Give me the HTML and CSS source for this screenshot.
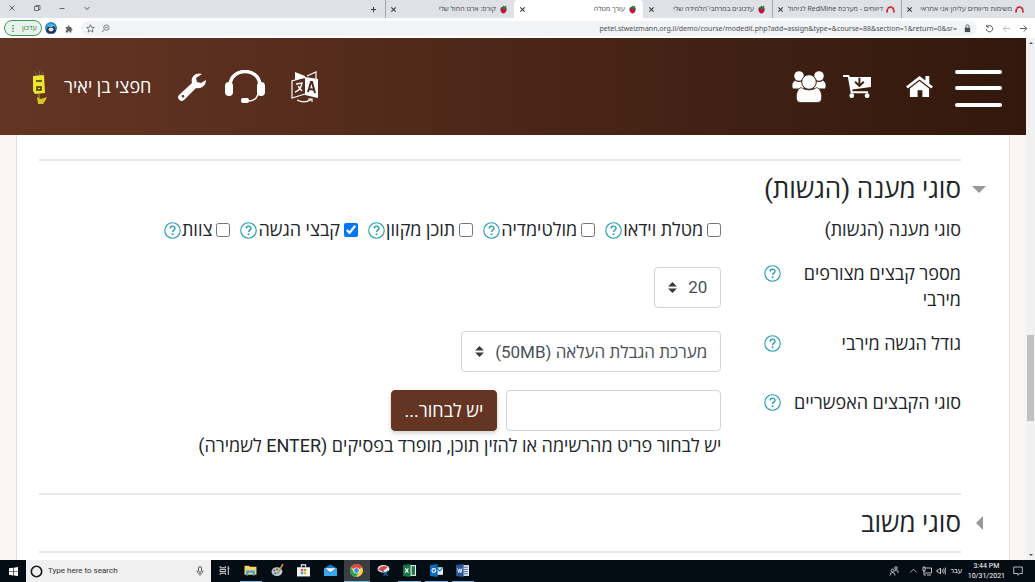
FILE: index.html
```html
<!DOCTYPE html>
<html lang="he">
<head>
    <meta charset="UTF-8">
    <meta name="viewport" content="width=device-width, initial-scale=1.0">
    <title>עורך מטלה</title>
    <link rel="stylesheet" href="styles.css">
</head>
<body>
    <svg class="sprite" aria-hidden="true">
        <symbol id="berry" viewBox="0 0 16 18">
            <path d="M8 5C3 3 1 7 2 11c1 4 4 6 6 6s5-2 6-6c1-4-1-8-6-6z" fill="#c3123f"/>
            <path d="M2 5l4-1 1-3 3 2 4-2-1 4 2 2-4 1-3 2-2-3z" fill="#2c7a36"/>
        </symbol>
        <symbol id="redmine" viewBox="0 0 18 16">
            <path d="M2 14C2 6 5 3 9 3s7 3 7 11" fill="none" stroke="#cf2027" stroke-width="3.500" stroke-dasharray="8 .6"/>
        </symbol>
        <symbol id="close" viewBox="0 0 8 8">
            <path d="M1.500 1.500l5 5m0-5l-5 5" stroke="#3c4043" stroke-width="1.300"/>
        </symbol>
        <symbol id="help" viewBox="0 0 18 18">
            <circle cx="9" cy="9" r="8.200" fill="none" stroke="#2aa0b5" stroke-width="1.200"/>
            <path d="M6.500 7c0-3.400 5.200-3.400 5.200-.3 0 1.900-2.600 1.900-2.600 4" fill="none" stroke="#2aa0b5" stroke-width="1.500"/>
            <circle cx="9.100" cy="13" r="1" fill="#2aa0b5"/>
        </symbol>
    </svg>

    <div class="tabstrip" dir="rtl">
        <div class="tab">
            <svg class="favicon"><use href="#redmine"/></svg>
            <span class="tab-title">משימות ודיווחים עליהן אני אחראי</span>
            <button class="tab-close" aria-label="סגירה"><svg><use href="#close"/></svg></button>
        </div>
        <div class="tab">
            <svg class="favicon"><use href="#redmine"/></svg>
            <span class="tab-title">דיווחים - מערכת RedMine לניהול</span>
            <button class="tab-close" aria-label="סגירה"><svg><use href="#close"/></svg></button>
        </div>
        <div class="tab">
            <svg class="favicon"><use href="#berry"/></svg>
            <span class="tab-title">עדכונים במרחבי־הלמידה שלי</span>
            <button class="tab-close" aria-label="סגירה"><svg><use href="#close"/></svg></button>
        </div>
        <div class="tab active">
            <svg class="favicon"><use href="#berry"/></svg>
            <span class="tab-title">עורך מטלה</span>
            <button class="tab-close" aria-label="סגירה"><svg><use href="#close"/></svg></button>
        </div>
        <div class="tab">
            <svg class="favicon"><use href="#berry"/></svg>
            <span class="tab-title">קורס: ארגז החול שלי</span>
            <button class="tab-close" aria-label="סגירה"><svg><use href="#close"/></svg></button>
        </div>
        <button class="new-tab" aria-label="כרטיסייה חדשה"><svg viewBox="0 0 8 8"><path d="M4 1v6M1 4h6" stroke="#3c4043" stroke-width="1.200"/></svg></button>
        <div class="window-controls" dir="ltr">
            <button aria-label="סגירה"><svg viewBox="0 0 8 8"><path d="M1.500 1.500l5 5m0-5l-5 5" stroke="#444" stroke-width=".8"/></svg></button>
            <button aria-label="שחזור"><svg viewBox="0 0 8 8"><path d="M1.500 2.500h4v4h-4zM3 2.500v-1h4v4H5.500" fill="none" stroke="#444" stroke-width=".7"/></svg></button>
            <button aria-label="מזעור"><svg viewBox="0 0 8 8"><path d="M1.500 4.500h5" stroke="#444" stroke-width=".8"/></svg></button>
            <button aria-label="חיפוש כרטיסיות"><svg viewBox="0 0 8 8"><path d="M1.500 3L4 5.500 6.500 3" fill="none" stroke="#444" stroke-width=".9"/></svg></button>
        </div>
    </div>

    <div class="toolbar">
        <button class="update-btn"><svg viewBox="0 0 4 10"><circle cx="2" cy="2" r=".9"/><circle cx="2" cy="5" r=".9"/><circle cx="2" cy="8" r=".9"/></svg><span>עדכון</span></button>
        <svg class="profile" viewBox="0 0 12 12"><circle cx="6" cy="6" r="6" fill="#2a8fc4"/><path d="M1 9l2-4 6-1 2 5-2 2.500H3z" fill="#20305e"/><ellipse cx="6" cy="7.500" rx="2.500" ry="2" fill="#f5ddd5"/><path d="M2 4q4-4 8 0L6 5z" fill="#4fc3e6"/></svg>
        <svg class="extension" viewBox="0 0 10 10"><path d="M1 3h2.500c-.6-2.500 2.600-2.500 2 0H8v2.400c2-.5 2 2.300 0 1.900V10H5.800c.4-2-2.400-2-2 0H1V7.300c1.800.3 1.800-2.300 0-1.900z" fill="#5f6368"/></svg>
        <div class="omnibox">
            <svg viewBox="0 0 10 10"><path d="M5 .8l1.200 2.900 3 .2L6.900 6l.8 3L5 7.400 2.300 9l.8-3L.8 3.900l3-.2z" fill="none" stroke="#5f6368" stroke-width=".9"/></svg>
            <svg viewBox="0 0 10 10"><circle cx="6" cy="4" r="3" fill="none" stroke="#5f6368" stroke-width=".9"/><path d="M3.800 6.200L1 9M4.600 4h2.800" stroke="#5f6368"/></svg>
            <input class="url" type="text" aria-label="כתובת" value="petel.stweizmann.org.il/demo/course/modedit.php?add=assign&amp;type=&amp;course=88&amp;section=1&amp;return=0&amp;sr=">
            <svg viewBox="0 0 10 10"><path d="M2 4h6v5H2z" fill="#4a4d51"/><path d="M3.300 4V2.600a1.700 1.700 0 013.400 0V4" fill="none" stroke="#4a4d51"/></svg>
        </div>
        <button class="nav-btn" aria-label="רענון"><svg viewBox="0 0 10 10"><path d="M2.300 3A3.500 3.500 0 111.500 5.500M2 .8V3.400h2.600" fill="none" stroke="#55585c" stroke-width="1.100"/></svg></button>
        <button class="nav-btn" aria-label="קדימה"><svg viewBox="0 0 10 10"><path d="M9 5H1.500M4.800 1.600L1.400 5l3.400 3.400" fill="none" stroke="#b9bbbe" stroke-width="1.100"/></svg></button>
        <button class="nav-btn" aria-label="אחורה"><svg viewBox="0 0 10 10"><path d="M1 5h7.500M5.200 1.600L8.600 5 5.200 8.400" fill="none" stroke="#55585c" stroke-width="1.100"/></svg></button>
    </div>

    <div class="viewport">
        <div class="page" dir="rtl">
            <header class="site-header">
                <button class="hamburger" aria-label="תפריט"><span></span><span></span><span></span></button>
                <a class="home" href="#" aria-label="דף הבית">
                    <svg viewBox="0 0 28 24"><path d="M14 1L0 12l1.800 2L14 4.600 26.200 14l1.800-2-3.800-3V1h-4v4.700z"/><path d="M4 14L14 6.200 24 14v9h-7v-7h-5v7H4z"/></svg>
                </a>
                <a class="cart" href="#" aria-label="סל">
                    <svg viewBox="0 0 30 26"><path d="M0 1h6l1.300 2H29v10.500L9.500 16l.3 2H26v2H8L5 3H0z"/><path d="M17 4v8m-4.500-4l4.500 4.300L21.500 8" fill="none" stroke="#391c10" stroke-width="2"/><circle cx="9" cy="22.500" r="2.500"/><circle cx="25" cy="22.500" r="2.500"/></svg>
                </a>
                <a class="users" href="#" aria-label="משתמשים">
                    <svg viewBox="0 0 34 32"><circle cx="7" cy="5" r="4.800"/><circle cx="27" cy="5" r="4.800"/><path d="M3 9.500q4 3 8 0l1 8H1q-2-5 2-8zM31 9.500q-4 3-8 0l-1 8h11q2-5-2-8z"/><circle cx="17" cy="11" r="7.300" stroke="#3e1f13"/><path d="M9 16.500q8 5 16 0c4 2 5 7 4.500 11-.3 3-2 4-4.500 4H9c-2.500 0-4.200-1-4.500-4-.5-4 .5-9 4.500-11z" stroke="#3e1f13" stroke-width=".7"/></svg>
                </a>
                <span class="header-space"></span>
                <a class="translate" href="#" aria-label="שפה">
                    <svg viewBox="0 0 28 32"><path d="M14 6l13 2v19l-13-3zM4 1l10 4v2L4 9z"/><path d="M14 6L1 10v17l13-4M16 5l9-4v7M6 29q8 4 15-1m-4 0h4v3" fill="none" stroke="#fff" stroke-width="1.200"/><path d="M5 13l6-1c-1 5-3 8-7 9m3-6l4 5" fill="none" stroke="#fff" stroke-width="1.300"/><path d="M17 21l3-10h1l3 11m-6-4l5 .8" fill="none" stroke="#54291b" stroke-width="2"/></svg>
                </a>
                <a class="headset" href="#" aria-label="תמיכה">
                    <svg viewBox="0 0 40 34"><path d="M5 15C6-3 34-3 35 15" fill="none" stroke="#fff" stroke-width="3.500"/><rect x="0" y="12" width="8" height="14" rx="4"/><rect x="32" y="12" width="8" height="14" rx="4"/><path d="M33 24q-2 7-9 7" fill="none" stroke="#fff" stroke-width="1.400"/><rect x="16" y="28" width="8" height="5" rx="2"/></svg>
                </a>
                <a class="wrench" href="#" aria-label="הגדרות">
                    <svg viewBox="0 0 28 28"><path fill-rule="evenodd" d="M24 1c-5-2-12 2-10 9L1 22c-3 3 2 8 5 5l12-12c5 1 10-2 10-8l-5 3-4-1-1-4zM5 22a1.300 1.300 0 110 2.600 1.300 1.300 0 010-2.600z"/></svg>
                </a>
                <span class="user-name">חפצי בן יאיר</span>
                <svg class="user-pic" viewBox="0 0 16 36"><path d="M7 7L3 2m5 5l1-6m0 6l4-4" stroke="#75685a"/><path d="M2 7l11-1 1 18-10 1-2-3z" fill="#efe52a"/><path d="M5 12h6M6 18h4v3H6z" fill="none" stroke="#3b3513" stroke-width="1.500"/><path d="M6 28l4 2 6-2-2 4-2 3H7z" fill="#d8c51d"/><path d="M8 25v4" stroke="#76752d" stroke-width="2"/></svg>
            </header>

            <main class="panel">
                <section class="fieldset">
                    <h2 class="open">סוגי מענה (הגשות)</h2>
                    <div class="form-row">
                        <div class="label-col"><span>סוגי מענה (הגשות)</span></div>
                        <div class="field-col options">
                            <div class="option"><label><input type="checkbox">מטלת וידאו</label><svg class="help"><use href="#help"/></svg></div>
                            <div class="option"><label><input type="checkbox">מולטימדיה</label><svg class="help"><use href="#help"/></svg></div>
                            <div class="option"><label><input type="checkbox">תוכן מקוון</label><svg class="help"><use href="#help"/></svg></div>
                            <div class="option"><label><input type="checkbox" checked>קבצי הגשה</label><svg class="help"><use href="#help"/></svg></div>
                            <div class="option"><label><input type="checkbox">צוות</label><svg class="help"><use href="#help"/></svg></div>
                        </div>
                    </div>
                    <div class="form-row">
                        <div class="label-col"><label for="maxfiles">מספר קבצים מצורפים מירבי</label><svg class="help"><use href="#help"/></svg></div>
                        <div class="field-col"><select id="maxfiles"><option>20</option></select></div>
                    </div>
                    <div class="form-row">
                        <div class="label-col"><label for="maxsize">גודל הגשה מירבי</label><svg class="help"><use href="#help"/></svg></div>
                        <div class="field-col"><select id="maxsize"><option>מערכת הגבלת העלאה (50MB)</option></select></div>
                    </div>
                    <div class="form-row">
                        <div class="label-col"><label for="filetypes">סוגי הקבצים האפשריים</label><svg class="help"><use href="#help"/></svg></div>
                        <div class="field-col">
                            <div class="picker">
                                <input id="filetypes" type="text">
                                <button class="choose">יש לבחור...</button>
                            </div>
                            <p class="hint">יש לבחור פריט מהרשימה או להזין תוכן, מופרד בפסיקים (ENTER לשמירה)</p>
                        </div>
                    </div>
                </section>
                <section class="fieldset">
                    <h2 class="closed">סוגי משוב</h2>
                </section>
                <section class="fieldset"></section>
            </main>
        </div>
        <div class="scrollbar">
            <span class="arrow-up"></span>
            <div class="track"><div class="thumb"></div></div>
            <span class="arrow-down"></span>
        </div>
    </div>

    <footer class="taskbar">
        <button class="start" aria-label="Start"><svg viewBox="0 0 10 10"><path d="M0 1.500l4.500-.7v4H0zM5.200.7L10 0v4.800H5.200zM0 5.400h4.500v4L0 8.700zM5.200 5.400H10V10l-4.800-.6z" fill="#fff"/></svg></button>
        <div class="search">
            <svg class="cortana" viewBox="0 0 12 12"><circle cx="6" cy="6" r="4.800" fill="none" stroke="#1b1b1b" stroke-width="1.500"/></svg>
            <input type="text" placeholder="Type here to search" aria-label="Type here to search">
            <svg class="mic" viewBox="0 0 8 10"><rect x="2.500" y=".6" width="3" height="5.500" rx="1.500" fill="none" stroke="#333" stroke-width=".8"/><path d="M1 4.500c0 4.500 6 4.500 6 0M4 8v2" fill="none" stroke="#333" stroke-width=".7"/></svg>
        </div>
        <div class="tasks">
            <button class="task" aria-label="Task View"><svg viewBox="0 0 12 12"><path d="M2 2v1.500h5V2M2 10V8.500h5V10M2 5h5v2H2zM9.500 2v8M9 4h1.500" fill="none" stroke="#ddd" stroke-width=".9"/></svg></button>
            <button class="task running" aria-label="File Explorer"><svg viewBox="0 0 12 12"><path d="M.5 1.500h4l1 1h6V10H.5z" fill="#f7d36b"/><path d="M2 6h8v4.500H8V8H4v2.500H2z" fill="#3da0dc"/></svg></button>
            <button class="task" aria-label="Paint"><svg viewBox="0 0 12 12"><ellipse cx="5.500" cy="7" rx="5" ry="4" fill="#b6cfdd"/><circle cx="3" cy="6" r="1" fill="#d33b2f"/><circle cx="5.500" cy="5" r="1" fill="#3a8b3d"/><circle cx="4" cy="8.500" r="1" fill="#2866b2"/><path d="M11 0L6 9" stroke="#d18a3c" stroke-width="1.500"/></svg></button>
            <button class="task" aria-label="Store"><svg viewBox="0 0 12 12"><path d="M0 3h12v8.500H0z" fill="#f5f5f5"/><path d="M4 3V.8h4V3" fill="none" stroke="#f5f5f5"/><path d="M3.500 4.500h2.200v2.200H3.500z" fill="#e8552d"/><path d="M6.300 4.500h2.200v2.200H6.300z" fill="#7eb72e"/><path d="M3.500 7.300h2.200v2.200H3.500z" fill="#2b9fe0"/><path d="M6.300 7.300h2.200v2.200H6.300z" fill="#f6b51c"/></svg></button>
            <button class="task" aria-label="Mail"><svg viewBox="0 0 12 12"><path d="M0 4l6-3.500L12 4v7H0z" fill="#1576c7"/><path d="M1 4h10L6 7.500z" fill="#fff"/><path d="M0 4l6 4 6-4v7H0z" fill="#37a9ea"/></svg></button>
            <button class="task running focused" aria-label="Chrome"><svg viewBox="0 0 12 12"><circle cx="6" cy="6" r="6" fill="#ffcd41"/><path d="M6 6L.8 3a6 6 0 0110.400 0z" fill="#df4a3c"/><path d="M.8 3a6 6 0 004.700 9L8 7.500 6 6 3.500 7.500z" fill="#28a057"/><circle cx="6" cy="6" r="2.800" fill="#fff"/><circle cx="6" cy="6" r="2.200" fill="#4688f0"/></svg></button>
            <button class="task" aria-label="Snipping Tool"><svg viewBox="0 0 12 12"><ellipse cx="6" cy="4.500" rx="5.500" ry="3.500" fill="#eee"/><path d="M1 5q4-5 9-2L5 7z" fill="#d94343"/><path d="M5 6l5 5M10 6L6 11" stroke="#2474b8"/></svg></button>
            <button class="task running" aria-label="Excel"><svg viewBox="0 0 12 12"><path d="M5 1h7v10H5z" fill="#e8f3ec"/><path d="M8 2h3v8H8z" fill="#1d7446"/><path d="M0 1l7-1v12l-7-1z" fill="#1d7446"/><path d="M2 4l3 4m0-4L2 8" stroke="#fff"/></svg></button>
            <button class="task running" aria-label="Outlook"><svg viewBox="0 0 12 12"><path d="M6 3h6v7H6z" fill="#dcecfa"/><path d="M6 3l3 3.500L12 3" fill="none" stroke="#0b6bbd"/><path d="M0 1l7-1v12l-7-1z" fill="#0b6bbd"/><circle cx="3.500" cy="6" r="1.700" fill="none" stroke="#fff"/></svg></button>
            <button class="task running" aria-label="Word"><svg viewBox="0 0 12 12"><path d="M6 1h6v10H6z" fill="#e7edf7"/><path d="M7 3h4M7 5h4M7 7h4M7 9h4" stroke="#2a5699" stroke-width=".8"/><path d="M0 1l7-1v12l-7-1z" fill="#2a5699"/><path d="M1.500 4l1 4 1-3.500 1 3.500 1-4" fill="none" stroke="#fff" stroke-width=".8"/></svg></button>
        </div>
        <div class="tray">
            <svg viewBox="0 0 10 10"><circle cx="3.500" cy="4.500" r="1.500"/><path d="M1 9.500q0-3 2.500-3T6 9.500"/><circle cx="7" cy="2" r="1.300"/><path d="M5.500 5q1.500-2 3.500 0v2"/></svg>
            <svg class="chevron" viewBox="0 0 10 10"><path d="M1.500 6.500L5 3l3.500 3.500"/></svg>
            <svg viewBox="0 0 10 10"><path d="M3 2h6.500v5H3M5 9h4M1 1h2v4H1zM2 5v4h2"/></svg>
            <svg viewBox="0 0 10 10"><path d="M1 4h1.500L4.500 2v6l-2-2H1zM6 3.500q1 1.500 0 3M7.500 2.500q1.700 2.500 0 5M9 1.500q2 3.500 0 7"/></svg>
            <span class="lang">עבר</span>
            <div class="clock"><span>3:44 PM</span><span>10/31/2021</span></div>
            <svg class="notify" viewBox="0 0 10 10"><path d="M.7 1h8.600v6.500H6.500L5 9.300V7.500H.7z"/></svg>
        </div>
    </footer>
</body>
</html>
```
FILE: styles.css
```css
:root {
    --brown: #653524;
    --brown-dark: #32180d;
    --line: #e8e8eb;
    --border: #ced4da;
    --text: #212529;
    --ui-font: "Open Sans", "Liberation Sans", sans-serif;
}

* {
    box-sizing: border-box;
}

body {
    margin: 0;
    height: 100vh;
    display: flex;
    flex-direction: column;
    overflow: hidden;
    font-family: Roboto, "Open Sans", sans-serif;
    font-size: 18px;
    line-height: 26px;
    color: var(--text);
}

button {
    font: inherit;
    border: none;
    background: none;
    padding: 0;
    cursor: pointer;
}

svg {
    display: block;
    flex-shrink: 0;
}

.sprite {
    position: absolute;
    width: 0;
    height: 0;
}

/* Browser window */
.tabstrip {
    display: flex;
    flex-shrink: 0;
    height: 18px;
    padding-right: 5px;
    background: #dee1e6;
    font-family: var(--ui-font);
    font-size: 7px;
    line-height: 18px;
    color: #45494d;
}

.tab {
    display: flex;
    align-items: center;
    gap: 3px;
    flex: 0 1 129px;
    min-width: 0;
    padding: 0 6px 0 4px;
    border-left: 1px solid #a3a6aa;
    background-clip: padding-box;
}

.tab:nth-child(3),
.tab.active {
    border-color: transparent;
}

.tab.active {
    background: #fff;
    border-radius: 4px 4px 0 0;
}

.favicon {
    width: 9px;
    height: 9px;
}

.tab-title {
    flex: 1;
    white-space: nowrap;
}

.tab-close svg,
.new-tab svg {
    width: 7px;
    height: 7px;
}

.new-tab {
    padding: 0 8px;
}

.window-controls {
    display: flex;
    gap: 17px;
    margin-right: auto;
    padding: 0 8px;
}

.window-controls svg {
    width: 8px;
    height: 8px;
}

.window-controls button {
    padding-bottom: 3px;
}

.toolbar {
    display: flex;
    align-items: center;
    gap: 8px;
    flex-shrink: 0;
    height: 20px;
    padding: 0 7px 0 4px;
    background: #fff;
    font-family: var(--ui-font);
    font-size: 7px;
}

.update-btn {
    display: flex;
    align-items: center;
    gap: 7px;
    height: 16px;
    width: 38px;
    padding: 0 6px;
    border: 1px solid #3c9a55;
    border-radius: 8px;
    background: #e9f3ec;
    color: #1e7a39;
}

.update-btn svg {
    width: 4px;
    height: 9px;
    fill: #1e7a39;
}

.profile {
    width: 12px;
    height: 12px;
    margin-left: -5px;
}

.extension {
    width: 8px;
    height: 9px;
}

.omnibox {
    display: flex;
    align-items: center;
    gap: 6px;
    flex: 1;
    height: 15px;
    padding: 0 5px;
    border-radius: 8px;
    background: #f1f3f4;
}

.omnibox svg,
.nav-btn svg {
    width: 9px;
    height: 9px;
}

.url {
    flex: 1;
    min-width: 0;
    padding: 0;
    border: none;
    background: none;
    font-family: "Noto Sans", sans-serif;
    font-size: 7px;
    color: #4d5054;
    text-align: right;
}

/* Site */
.viewport {
    display: flex;
    flex: 1;
    min-height: 0;
}

.page {
    flex: 1;
    display: flex;
    flex-direction: column;
    overflow: hidden;
    background: #faf4f2;
}

.site-header {
    display: flex;
    align-items: center;
    flex-shrink: 0;
    height: 97px;
    padding: 0 24px 0 31px;
    background: linear-gradient(to left, var(--brown-dark), var(--brown));
    color: #fff;
}

.site-header svg {
    fill: #fff;
}

.hamburger {
    display: flex;
    flex-direction: column;
    justify-content: space-between;
    width: 47px;
    height: 37px;
    margin: 3px 0 0 22px;
}

.hamburger span {
    height: 4px;
    border-radius: 2px;
    background: #fff;
}

.home svg {
    width: 27px;
    height: 23px;
    margin-left: 34px;
}

.cart svg {
    width: 29px;
    height: 25px;
    margin-left: 17px;
}

.users svg {
    width: 34px;
    height: 32px;
}

.header-space {
    flex: 1;
}

.translate svg {
    width: 28px;
    height: 32px;
    margin-left: 26px;
}

.headset svg {
    width: 40px;
    height: 34px;
    margin-left: 19px;
}

.wrench svg {
    width: 28px;
    height: 28px;
    margin-left: 27px;
}

.user-name {
    margin-left: 17px;
}

.user-pic {
    width: 16px;
    height: 36px;
}

.panel {
    flex: 1;
    margin: 0 16px;
    padding: 24px 48px 0 22px;
    border: solid #e2dfdf;
    border-width: 0 1px;
    background: #fff;
}

.fieldset {
    padding-bottom: 16px;
    border-top: 2px solid var(--line);
}

.fieldset:nth-child(2) {
    padding-bottom: 0;
}

h2 {
    position: relative;
    margin: 0;
    font-size: 26px;
    font-weight: 400;
    line-height: 56px;
}

h2::before {
    content: "";
    position: absolute;
    right: -25px;
    top: 25px;
    border: 7px solid transparent;
}

h2.open::before {
    border-top-color: #999;
    border-bottom: 0;
}

h2.closed::before {
    right: -22px;
    top: 21px;
    border-right-color: #999;
    border-left: 0;
}

.form-row {
    display: flex;
    margin-bottom: 18px;
}

.label-col {
    display: flex;
    justify-content: space-between;
    flex: 0 0 26%;
    padding-left: 43px;
}

.label-col .help {
    margin-top: 4px;
}

.help {
    width: 17px;
    height: 17px;
}

.field-col {
    flex: 1;
    align-self: center;
}

.options {
    display: flex;
    gap: 10px;
}

.option,
.option label {
    display: flex;
    align-items: center;
}

.option {
    gap: 1px;
    white-space: nowrap;
}

.option input {
    width: 14px;
    height: 14px;
    margin: 0 0 0 4px;
}

select,
.picker input,
.choose {
    display: block;
    height: 41px;
    border: 1px solid var(--border);
    border-radius: 4px;
    font: inherit;
}

select {
    appearance: none;
    padding: 0 13px 0 32px;
    font-size: 17px;
    color: #495057;
    background: #fff url("data:image/svg+xml,%3Csvg xmlns='http://www.w3.org/2000/svg' viewBox='0 0 4 5'%3E%3Cpath fill='%23343a40' d='M2 0L0 2h4zm0 5L0 3h4z'/%3E%3C/svg%3E") no-repeat left 13px center / 9px 11px;
}

.picker {
    display: flex;
    gap: 9px;
}

.picker input {
    width: 215px;
}

.choose {
    padding: 0 13px;
    border-color: var(--brown);
    background: var(--brown);
    color: #fff;
    box-shadow: 0 2px 5px rgba(0, 0, 0, 0.2);
}

.hint {
    margin: 2px 0 0;
}

.scrollbar {
    display: flex;
    flex-direction: column;
    align-items: center;
    width: 9px;
    padding: 4px 0;
    background: #f1f1f1;
}

.track {
    flex: 1;
    width: 7px;
    display: flex;
    flex-direction: column;
}

.track::before {
    content: "";
    flex: 57;
}

.track::after {
    content: "";
    flex: 26;
}

.thumb {
    flex: 17;
    background: #c1c1c1;
}

.arrow-up,
.arrow-down {
    border: 2px solid transparent;
}

.arrow-up {
    border-top: 0;
    border-bottom-color: #505050;
}

.arrow-down {
    border-bottom: 0;
    border-top-color: #505050;
}

/* Taskbar */
.taskbar {
    display: flex;
    flex-shrink: 0;
    height: 22px;
    background: #050d14;
    font-family: Roboto, "Open Sans", sans-serif;
    font-size: 7px;
    line-height: 10px;
    color: #fff;
}

.tasks {
    display: flex;
    width: 265px;
}

.task,
.start {
    display: flex;
    align-items: center;
    justify-content: center;
}

.task {
    flex: 1;
    margin: 0 2px;
    border-bottom: 1px solid transparent;
}

.task svg {
    width: 13px;
    height: 13px;
}

.start {
    width: 26px;
}

.start svg {
    width: 9px;
    height: 9px;
}

.running {
    border-color: #76b9ed;
}

.focused {
    margin: 0;
    flex: 0 0 26px;
    background: #3b3f44;
}

.search {
    display: flex;
    align-items: center;
    gap: 5px;
    width: 185px;
    padding: 0 7px 0 4px;
    background: #f0f0f0;
}

.search input {
    flex: 1;
    min-width: 0;
    padding: 0;
    border: none;
    background: none;
    font: inherit;
    font-size: 8px;
}

.search input::placeholder {
    color: #333;
}

.cortana {
    width: 13px;
    height: 13px;
}

.mic {
    width: 8px;
    height: 10px;
}

.tray {
    display: flex;
    align-items: center;
    gap: 4px;
    margin-left: auto;
    padding-right: 12px;
}

.tray svg {
    width: 10px;
    height: 10px;
    fill: none;
    stroke: #e6e6e6;
    stroke-width: 0.8;
}

.tray .chevron {
    margin-left: 6px;
    width: 9px;
}

.clock {
    display: flex;
    flex-direction: column;
    align-items: center;
    margin: 0 4px 0 2px;
}
```
